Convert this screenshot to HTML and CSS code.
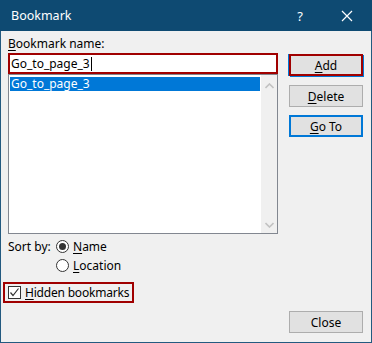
FILE: index.html
```html
<!DOCTYPE html>
<html lang="en">
<head>
    <meta charset="UTF-8">
    <title>Bookmark</title>
    <link rel="stylesheet" href="styles.css">
</head>
<body>
    <div class="window">
        <div class="titlebar">
            <span class="title">Bookmark</span>
            <span class="help">?</span>
            <svg class="close-x" width="12" height="12" viewBox="0 0 12 12">
                <path d="M1 1 L11 11 M11 1 L1 11" stroke="#fff" stroke-width="1.2" fill="none"/>
            </svg>
        </div>

        <div class="content">
            <div class="left">
                <div class="label"><u>B</u>ookmark name:</div>
                <div class="name-input">Go_to_page_3<span class="caret"></span></div>

                <div class="list">
                    <div class="items">
                        <div class="item selected">Go_to_page_3</div>
                    </div>
                    <div class="scrollbar">
                        <svg width="9" height="6" viewBox="0 0 9 6">
                            <path d="M0.5 5 L4.5 1 L8.5 5" stroke="#c2c2c2" stroke-width="1.6" fill="none"/>
                        </svg>
                        <svg width="9" height="6" viewBox="0 0 9 6">
                            <path d="M0.5 1 L4.5 5 L8.5 1" stroke="#c2c2c2" stroke-width="1.6" fill="none"/>
                        </svg>
                    </div>
                </div>

                <div class="sort">
                    <span class="sort-label">Sort by:</span>
                    <div class="radios">
                        <div class="radio-row"><span class="radio checked"></span><u>N</u>ame</div>
                        <div class="radio-row"><span class="radio"></span><u>L</u>ocation</div>
                    </div>
                </div>

                <div class="hidden-box">
                    <span class="checkbox">
                        <svg width="11" height="11" viewBox="0 0 11 11">
                            <path d="M1.5 5.5 L4 8.5 L9.5 1.5" stroke="#333" stroke-width="1.2" fill="none"/>
                        </svg>
                    </span>
                    <span class="hidden-text"><u>H</u>idden bookmarks</span>
                </div>
            </div>

            <div class="right">
                <div class="btn btn-add"><u>A</u>dd</div>
                <div class="btn btn-delete"><u>D</u>elete</div>
                <div class="btn btn-goto"><u>G</u>o To</div>
                <div class="btn btn-close">Close</div>
            </div>
        </div>
    </div>
</body>
</html>
```

FILE: styles.css
```css
body {
    margin: 0;
    font-family: 'Noto Sans', sans-serif;
    font-size: 12px;
    color: #000;
}

u {
    text-decoration: underline;
    text-underline-offset: 2px;
}

.window {
    width: 372px;
    height: 343px;
    box-sizing: border-box;
    border: 1px solid #235a80;
    border-top: none;
    background-color: #f0f0f0;
    display: flex;
    flex-direction: column;
}

.titlebar {
    height: 31px;
    flex-shrink: 0;
    margin: 0 -1px;
    background-color: #0e4a72;
    color: white;
    display: flex;
    align-items: center;
    padding-left: 11px;
}

.title {
    flex: 1;
    font-size: 12.5px;
}

.help {
    font-size: 13px;
    margin-right: 38px;
}

.close-x {
    margin-right: 19px;
}

.content {
    flex: 1;
    display: grid;
    grid-template-columns: 270px 74px;
    column-gap: 11px;
    padding: 5px 7px 9px 7px;
}

.left {
    display: flex;
    flex-direction: column;
}

.label {
    height: 17px;
    line-height: 16px;
}

.name-input {
    height: 21px;
    box-sizing: border-box;
    border: 2px solid #a00000;
    background: white;
    padding-left: 1px;
    line-height: 17px;
    display: flex;
    align-items: center;
}

.caret {
    display: inline-block;
    width: 1px;
    height: 14px;
    background: #000;
    margin-left: 1px;
}

.list {
    height: 160px;
    box-sizing: border-box;
    border: 1px solid #828790;
    background: white;
    display: flex;
}

.items {
    flex: 1;
    padding: 2px 1px;
}

.item {
    height: 14px;
    line-height: 14px;
    padding-left: 1px;
}

.selected {
    background-color: #0078d7;
    color: white;
}

.scrollbar {
    width: 16px;
    background: #f0f0f0;
    display: flex;
    flex-direction: column;
    justify-content: space-between;
    align-items: center;
    padding: 8px 0 5px;
}

.sort {
    display: flex;
    margin-top: 3px;
}

.sort-label {
    width: 48px;
    line-height: 19px;
}

.radio-row {
    height: 19px;
    display: flex;
    align-items: center;
}

.radio {
    width: 13px;
    height: 13px;
    box-sizing: border-box;
    border: 1px solid #333;
    border-radius: 50%;
    background: white;
    margin-right: 4px;
    display: flex;
    align-items: center;
    justify-content: center;
}

.radio.checked::after {
    content: "";
    width: 7px;
    height: 7px;
    border-radius: 50%;
    background: #333;
}

.hidden-box {
    margin-top: 7px;
    margin-left: -5px;
    width: 131px;
    height: 21px;
    box-sizing: border-box;
    border: 2px solid #a00000;
    display: flex;
    align-items: center;
    padding-left: 3px;
    white-space: nowrap;
}

.hidden-text {
    letter-spacing: -0.2px;
}

.checkbox {
    width: 13px;
    height: 13px;
    flex-shrink: 0;
    box-sizing: border-box;
    border: 1px solid #333;
    background: white;
    margin-right: 4px;
    display: flex;
    align-items: center;
    justify-content: center;
}

.right {
    display: flex;
    flex-direction: column;
    padding-top: 18px;
}

.btn {
    height: 22px;
    box-sizing: border-box;
    border: 1px solid #adadad;
    background-color: #e1e1e1;
    display: flex;
    align-items: center;
    justify-content: center;
}

.btn-add {
    border: 2px solid #a00000;
    box-shadow: 1px 1px 0 #0078d7, -1px 0 0 #0078d7;
}

.btn-delete {
    margin-top: 9px;
}

.btn-goto {
    margin-top: 8px;
    border: 2px solid #0078d7;
}

.btn-close {
    margin-top: auto;
}
```
